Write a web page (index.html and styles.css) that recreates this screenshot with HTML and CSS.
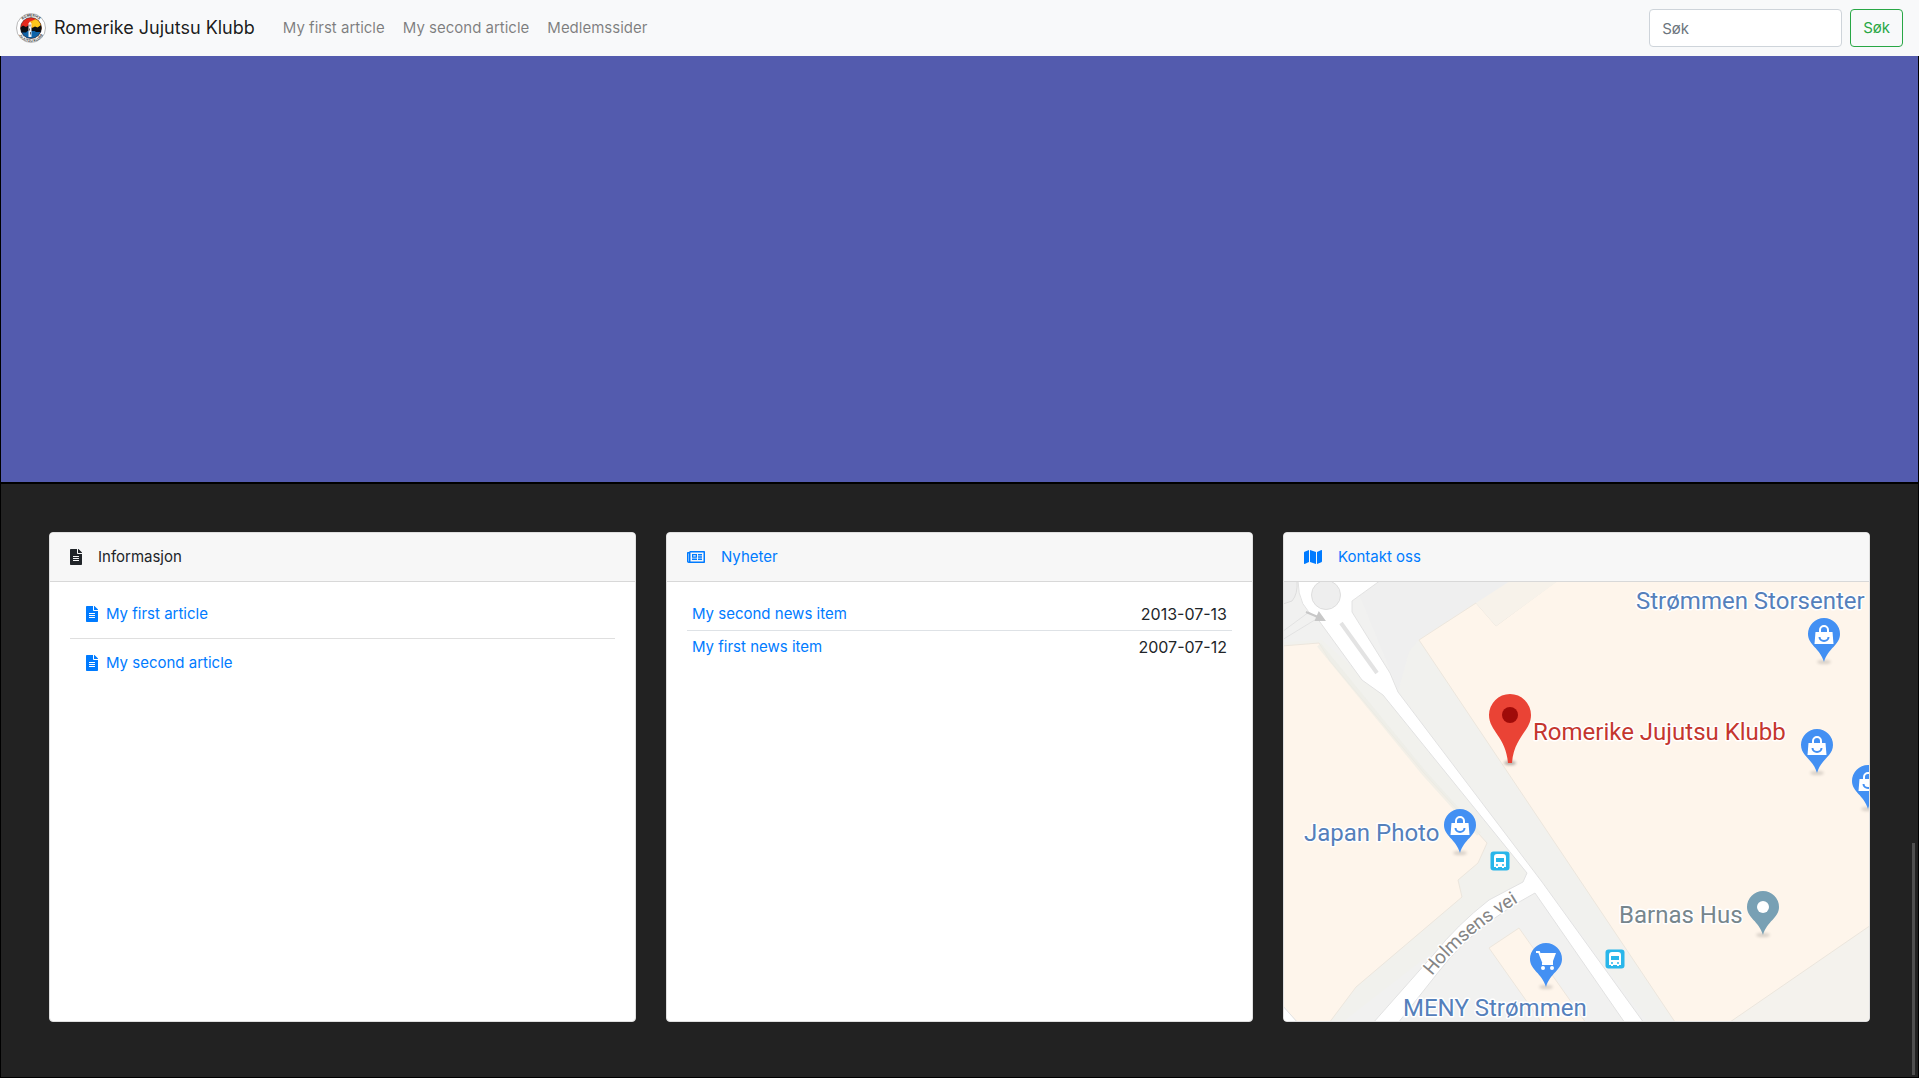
FILE: index.html
```html
<!DOCTYPE html>
<html lang="no">
<head>
<meta charset="utf-8">
<meta name="viewport" content="width=device-width, initial-scale=1">
<title>Romerike Jujutsu Klubb</title>
<link rel="stylesheet" href="styles.css">
</head>
<body>
<svg class="sprite" aria-hidden="true">
  <symbol id="icon-file" viewBox="0 0 384 512"><path d="M224 136V0H24C10.7 0 0 10.7 0 24v464c0 13.300 10.700 24 24 24h336c13.300 0 24-10.700 24-24V160H248c-13.200 0-24-10.800-24-24zm64 236c0 6.600-5.400 12-12 12H108c-6.600 0-12-5.400-12-12v-8c0-6.600 5.400-12 12-12h168c6.600 0 12 5.400 12 12v8zm0-64c0 6.600-5.400 12-12 12H108c-6.600 0-12-5.400-12-12v-8c0-6.600 5.400-12 12-12h168c6.600 0 12 5.400 12 12v8zm0-72v8c0 6.600-5.400 12-12 12H108c-6.600 0-12-5.400-12-12v-8c0-6.600 5.400-12 12-12h168c6.600 0 12 5.400 12 12zm96-114.100v6.100H256V0h6.100c6.400 0 12.500 2.500 17 7l97.900 98c4.500 4.500 7 10.600 7 16.900z"/></symbol>
  <symbol id="icon-news" viewBox="0 0 576 512"><path d="M552 64H112c-20.858 0-38.643 13.377-45.248 32H24c-13.255 0-24 10.745-24 24v272c0 30.928 25.072 56 56 56h496c13.255 0 24-10.745 24-24V88c0-13.255-10.745-24-24-24zM48 392V144h16v248c0 4.411-3.589 8-8 8s-8-3.589-8-8zm480 8H111.422c.374-2.614.578-5.283.578-8V112h416v288zM172 280h136c6.627 0 12-5.373 12-12v-96c0-6.627-5.373-12-12-12H172c-6.627 0-12 5.373-12 12v96c0 6.627 5.373 12 12 12zm28-80h80v40h-80v-40zm-40 140v-24c0-6.627 5.373-12 12-12h136c6.627 0 12 5.373 12 12v24c0 6.627-5.373 12-12 12H172c-6.627 0-12-5.373-12-12zm192 0v-24c0-6.627 5.373-12 12-12h104c6.627 0 12 5.373 12 12v24c0 6.627-5.373 12-12 12H364c-6.627 0-12-5.373-12-12zm0-144v-24c0-6.627 5.373-12 12-12h104c6.627 0 12 5.373 12 12v24c0 6.627-5.373 12-12 12H364c-6.627 0-12-5.373-12-12zm0 72v-24c0-6.627 5.373-12 12-12h104c6.627 0 12 5.373 12 12v24c0 6.627-5.373 12-12 12H364c-6.627 0-12-5.373-12-12z"/></symbol>
  <symbol id="icon-map" viewBox="0 0 576 512"><path d="M0 117.660v346.320c0 11.320 11.430 19.060 21.940 14.860L160 416V32L20.120 87.950A32.006 32.006 0 0 0 0 117.660zM192 416l192 64V96L192 32v384zM554.060 33.160L416 96v384l139.880-55.950A31.996 31.996 0 0 0 576 394.340V48.020c0-11.320-11.430-19.060-21.940-14.860z"/></symbol>
</svg>

<nav class="navbar">
  <a class="brand" href="#">
    <svg class="brand-logo" viewBox="0 0 60 60" aria-hidden="true">
      <defs>
        <clipPath id="disc"><circle cx="30" cy="30" r="21"/></clipPath>
        <path id="ring-top" d="M7 30a23 23 0 0 1 46 0"/>
        <path id="ring-bottom" d="M2 30a28 28 0 0 0 56 0"/>
      </defs>
      <circle cx="30" cy="30" r="29" fill="#fff" stroke="#777" stroke-width="1"/>
      <g clip-path="url(#disc)">
        <path fill="#e5281c" d="M8 8h44v44H8z"/>
        <path fill="#f9a51a" d="M28 34V17l12-5 14 8v14z"/>
        <circle cx="40" cy="22" r="8" fill="#fcc51c"/>
        <path fill="#0c0f14" d="M8 30l6-5 6 3 6-4 6 6 6-3 5 2 9-6v14H8z"/>
        <path fill="#0f63a8" d="M8 36h44v16H8z"/>
        <path fill="#0c0f14" d="M8 35h16l-4 4H8zM36 35h16v3H40z"/>
      </g>
      <circle cx="30" cy="30" r="21" fill="none" stroke="#222" stroke-width="1"/>
      <path fill="#f4f6f8" d="M25 21l3-4 3 4v27h-6z"/>
      <path stroke="#333" stroke-width="1.500" d="M28 23v4M27 31v4M29 38v5"/>
      <text class="logo-text"><textPath href="#ring-top" startOffset="50%">ROMERIKE</textPath></text>
      <text class="logo-text"><textPath href="#ring-bottom" startOffset="50%">JUJUTSU KLUBB</textPath></text>
    </svg>
    <span>Romerike Jujutsu Klubb</span>
  </a>
  <ul class="nav-links">
    <li><a href="#">My first article</a></li>
    <li><a href="#">My second article</a></li>
    <li><a href="#">Medlemssider</a></li>
  </ul>
  <form class="search">
    <input type="search" placeholder="Søk" aria-label="Søk">
    <button type="submit">Søk</button>
  </form>
</nav>

<main>
  <section class="hero"></section>
  <section class="panels">
    <article class="card">
      <h2 class="card-header"><svg class="icon-narrow" aria-hidden="true"><use href="#icon-file"/></svg>Informasjon</h2>
      <ul class="articles">
        <li><a href="#"><svg class="icon-narrow" aria-hidden="true"><use href="#icon-file"/></svg>My first article</a></li>
        <li><a href="#"><svg class="icon-narrow" aria-hidden="true"><use href="#icon-file"/></svg>My second article</a></li>
      </ul>
    </article>

    <article class="card">
      <h2 class="card-header"><a href="#"><svg class="icon-wide" aria-hidden="true"><use href="#icon-news"/></svg>Nyheter</a></h2>
      <div class="news">
        <table>
          <tbody>
            <tr><td><a href="#">My second news item</a></td><td class="date">2013-07-13</td></tr>
            <tr><td><a href="#">My first news item</a></td><td class="date">2007-07-12</td></tr>
          </tbody>
        </table>
      </div>
    </article>

    <article class="card">
      <h2 class="card-header"><a href="#"><svg class="icon-wide" aria-hidden="true"><use href="#icon-map"/></svg>Kontakt oss</a></h2>
      <svg class="map" viewBox="0 0 585 439" preserveAspectRatio="xMidYMid slice" role="img" aria-label="Kart">
        <defs>
          <filter id="soft" x="-50%" y="-200%" width="200%" height="500%"><feGaussianBlur stdDeviation="1.500"/></filter>
          <g id="pin">
            <ellipse cx="0" cy="28" rx="7" ry="2" fill="#000" opacity=".15" filter="url(#soft)"/>
            <path d="M0-16a16 16 0 0 1 16 16C16 11 4 14 0 28-4 14-16 11-16 0A16 16 0 0 1 0-16z"/>
          </g>
          <g id="shop">
            <use href="#pin" fill="#4390f3"/>
            <path d="M-8.500-2h17l1 12h-19z" fill="#fff"/>
            <path d="M-4-1v-3a4 4 0 0 1 8 0v3" fill="none" stroke="#fff" stroke-width="2"/>
            <path d="M-4.500 3a4.500 4 0 0 0 9 0" fill="none" stroke="#4390f3" stroke-width="2"/>
          </g>
          <g id="bus">
            <rect x="-9.500" y="-9.500" width="19" height="19" rx="3" fill="#29b6ea"/>
            <path d="M-6 6v-10q0-3 3-3h6q3 0 3 3v10h-2v1h-2v-1h-4v1h-2v-1z" fill="#fff"/>
            <path d="M-4-3h8v4h-8z" fill="#29b6ea"/>
            <circle cx="-3" cy="4" r="1" fill="#29b6ea"/><circle cx="3" cy="4" r="1" fill="#29b6ea"/>
          </g>
          <path id="street" d="M148 394Q183 350 240 317"/>
        </defs>
        <rect width="585" height="439" fill="#f1f1f0"/>
        <path d="M70 0h200L135 58l-20 52z" fill="#efefef"/>
        <path d="M0 60 38 58 99 113 243 291 239 300 60 439H0z" fill="#f1f1ed"/>
        <path d="M135 58 391 439h-28L258 300 114 110 125 70z" fill="#f1f1ee"/>
        <path d="M446 439 585 343v96z" fill="#f4f2ed"/>
        <g fill="#fef5eb" stroke="#ece6dd">
          <path d="M-2 64 35 61 46 79 140 191 203 261 194 281 174 298 178 315 72 405 45 441H14L-2 424z"/>
          <path d="M135 58 192 21 212 44 274-2H587V343L446 440H391z"/>
          <path d="M205 366 235 346 302 441H258z"/>
        </g>
        <path d="M192 21 212 44 274-1H226z" fill="#f7f2ea"/>
        <path d="M35 63 140 191 195 252" fill="none" stroke="#ecece5" stroke-width="5" opacity=".7"/>
        <g fill="#fff" stroke="#e2e2e2">
          <path d="M-2 50 25 30M-2 58 34 36" fill="none"/>
          <path d="M14-2Q14 26 33 36L78 98 99 113 243 291 239 300 205 318Q173 343 150 372L89 441H114L156 388Q190 344 251 311L341 441H360L258 300 114 110 106 91 68 30V19L97-2z"/>
          <path d="M-2 423 14 441H-2z"/>
        </g>
        <circle cx="42" cy="13" r="14.500" fill="#eee" stroke="#ddd"/>
        <path d="M-1-1H13Q14 12 8 19L-1 22z" fill="#eee" stroke="#ddd"/>
        <path d="M57 41 93 91" stroke="#e3e3e3" stroke-width="4"/>
        <path d="M22 30 34 35M32 38l8 0-5-7z" stroke="#c8c8c8" stroke-width="2" fill="#c8c8c8"/>

        <text class="street-label"><textPath href="#street">Holmsens vei</textPath></text>
        <g class="place-label">
          <text x="352" y="27">Strømmen Storsenter</text>
          <text x="20" y="259">Japan Photo</text>
          <text x="119" y="434">MENY Strømmen</text>
          <text class="label-club" x="249" y="158">Romerike Jujutsu Klubb</text>
          <text class="label-other" x="335" y="341">Barnas Hus</text>
        </g>
        <use href="#shop" x="540" y="52"/>
        <use href="#shop" x="533" y="163"/>
        <use href="#shop" x="584" y="199"/>
        <use href="#shop" x="176" y="243"/>
        <use href="#bus" x="216" y="279"/>
        <use href="#bus" x="331" y="377"/>
        <g transform="translate(262 377)">
          <use href="#pin" fill="#4390f3"/>
          <path d="M-10-7h3l4 10h10" fill="none" stroke="#fff" stroke-width="2"/>
          <path d="M-6-6H10L7 2H-3z" fill="#fff"/>
          <path d="M-4 5H7" stroke="#fff" stroke-width="2"/>
          <circle cx="-3" cy="9" r="2" fill="#fff"/><circle cx="6" cy="9" r="2" fill="#fff"/>
        </g>
        <g transform="translate(479 325)">
          <use href="#pin" fill="#78a0b4"/>
          <circle r="6" fill="#fff"/>
        </g>
        <g transform="translate(226 133)">
          <ellipse cx="0" cy="48" rx="6" ry="2" opacity=".3" filter="url(#soft)"/>
          <path d="M0-21A21 21 0 0 1 21 0C21 16 4 22 2 48H-2C-4 22-21 16-21 0A21 21 0 0 1 0-21z" fill="#ea4335"/>
          <circle r="8" fill="#a00b09"/>
        </g>
      </svg>
    </article>
  </section>
</main>
<div class="scroll-thumb" aria-hidden="true"></div>
</body>
</html>
```
FILE: styles.css
```css
* {
  box-sizing: border-box;
}

body {
  margin: 0;
  font-family: Inter, "Liberation Sans", sans-serif;
  font-size: 15px;
  line-height: 24px;
  color: #212529;
  background: #fff;
}

a {
  color: #007bff;
  text-decoration: none;
}

ul {
  margin: 0;
  padding: 0;
  list-style: none;
}

.sprite {
  display: none;
}

.navbar {
  display: flex;
  align-items: center;
  padding: 8px 16px;
  min-height: 56px;
  background: #f8f9fa;
}

.brand {
  display: flex;
  align-items: center;
  gap: 8px;
  margin-right: 28px;
  font-size: 18px;
  color: rgba(0, 0, 0, .9);
}

.brand-logo {
  width: 30px;
  height: 30px;
}

.logo-text {
  font-size: 7px;
  font-weight: 700;
  text-anchor: middle;
  fill: #444;
}

.nav-links {
  display: flex;
  gap: 18px;
}

.nav-links a {
  color: rgba(0, 0, 0, .5);
}

.search {
  display: flex;
  gap: 8px;
  margin-left: auto;
}

.search input,
.search button {
  height: 38px;
  padding: 6px 12px;
  font: inherit;
  border-radius: 4px;
}

.search input {
  width: 193px;
  color: #495057;
  background: #fff;
  border: 1px solid #ced4da;
  appearance: none;
}

.search input::placeholder {
  color: #6c757d;
  opacity: 1;
}

.search button {
  color: #28a745;
  background: transparent;
  border: 1px solid #28a745;
}

.hero,
.panels {
  border: 1px solid #000;
}

.hero {
  min-height: 427px;
  border-top: 0;
  background: #535bae;
}

.panels {
  display: grid;
  grid-template-columns: repeat(3, 1fr);
  gap: 30px;
  padding: 48px 48px 55px;
  background: #222;
}

.card {
  display: flex;
  flex-direction: column;
  overflow: hidden;
  background: #fff;
  border: 1px solid #dfdfdf;
  border-radius: 4px;
}

.card-header {
  display: flex;
  align-items: center;
  gap: 16px;
  margin: 0;
  padding: 12px 20px;
  font-size: 15px;
  font-weight: 400;
  background: #f7f7f7;
  border-bottom: 1px solid #d8d8d8;
}

.card-header a,
.articles a {
  display: flex;
  align-items: center;
}

.card-header a {
  gap: 16px;
}

.articles a {
  gap: 8px;
}

.icon-narrow,
.icon-wide {
  height: 16px;
  fill: currentColor;
}

.icon-narrow {
  width: 12px;
}

.icon-wide {
  width: 18px;
}

.articles {
  padding: 8px 20px;
}

.articles li {
  padding: 12px 16px;
}

.articles li + li {
  border-top: 1px solid #dfdfdf;
}

.news {
  padding: 16px 20px;
}

.news table {
  width: 100%;
  border-collapse: separate;
  border-spacing: 0;
}

.news td {
  padding: 4px 5px;
}

.news tr + tr td {
  border-top: 1px solid #dee2e6;
}

.news .date {
  font-size: 16px;
  text-align: right;
}

.map {
  display: block;
  width: 100%;
  aspect-ratio: 585 / 439;
}

.place-label,
.street-label {
  font-family: Roboto, "Liberation Sans", sans-serif;
  stroke: #fff;
  stroke-width: 3px;
  stroke-linejoin: round;
  paint-order: stroke;
}

.place-label {
  font-size: 24px;
  fill: #5580bb;
}

.place-label .label-club {
  fill: #c5362e;
}

.place-label .label-other {
  fill: #77868d;
}

.street-label {
  font-size: 19px;
  fill: #858585;
}

.scroll-thumb {
  position: fixed;
  right: 4px;
  bottom: 4px;
  width: 3px;
  height: 232px;
  background: #4f4f4f;
}
```
